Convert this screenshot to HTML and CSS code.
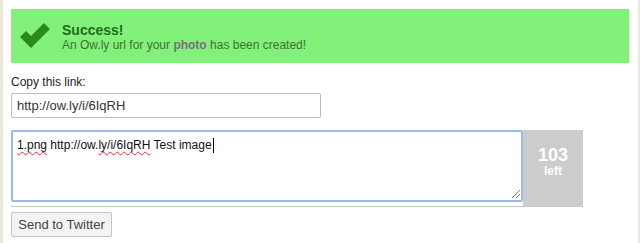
FILE: index.html
```html
<!DOCTYPE html>
<html lang="en">
<head>
    <meta charset="UTF-8">
    <title>Ow.ly</title>
    <link rel="stylesheet" href="styles.css">
</head>
<body>
    <div class="page">
        <div class="msg_ok">
            <svg class="ico" width="30" height="26" viewBox="0 0 30 26">
                <path d="M0 14 L6 8 L11 13 L24 0 L30 6 L11 25 Z" fill="#2a8a1e"/>
            </svg>
            <div class="msg_txt">
                <strong>Success!</strong>
                <p>An Ow.ly url for your <b>photo</b> has been created!</p>
            </div>
        </div>

        <label class="lbl">Copy this link:</label>
        <div class="link_box">http://ow.ly/i/6IqRH</div>

        <div class="tw_row">
            <div class="tw_area">
                <div class="tw_txt"><span class="sp">1.png</span> http://ow.<span class="sp">ly/i/6IqRH</span> Test image<span class="caret"></span></div>
                <span class="grip"></span>
            </div>
            <div class="count">
                <strong>103</strong>
                <span>left</span>
            </div>
        </div>

        <button class="btn">Send to Twitter</button>
    </div>
</body>
</html>
```

FILE: styles.css
```css
/* reset */
body,p{margin: 0; padding: 0;}
body{font-family: "Liberation Sans", Arial, sans-serif; background: #ebe8dc;}

/* layout */
.page{
    margin: 0 2px 0 3px; height: 243px; background: #fff;
    padding: 9px 8px 0 8px; box-sizing: border-box;
}

.msg_ok{
    width: 618px; height: 54px; background: #81f179;
    display: flex; align-items: flex-start; box-sizing: border-box;
    padding: 14px 0 0 9px;
}
.msg_ok .ico{margin-top: 0; margin-right: 12px;}
.msg_txt strong{display: block; font-size: 14px; color: #236b1a; line-height: 15px; margin-top: 0;}
.msg_txt p{font-size: 12px; color: #43703a; line-height: 15px;}
.msg_txt p b{color: #7b6c7b;}

.lbl{display: block; font-size: 12px; color: #222; margin-top: 11px; line-height: 16px;}
.link_box{
    width: 310px; height: 25px; box-sizing: border-box; margin-top: 3px;
    border: 1px solid #bdbdbd; border-radius: 2px;
    font-size: 13px; color: #333; padding: 4px 0 0 5px;
}

.tw_row{display: flex; margin-top: 12px;}
.tw_area{
    position: relative; width: 512px; height: 77px; box-sizing: border-box;
    border-bottom: 1px solid #c4c4c4;
}
.tw_area .tw_txt{
    height: 72px; box-sizing: border-box;
    border: 2px solid #9ab8f2; border-radius: 2px;
    font-size: 12px; color: #111; padding: 6px 0 0 4px; line-height: 14px;
}
.sp{text-decoration: underline wavy #e03030; text-decoration-thickness: 1px; text-underline-offset: 2px;}
.caret{display: inline-block; width: 1px; height: 15px; background: #000; vertical-align: top; margin-left: 1px;}
.grip{
    position: absolute; right: 3px; bottom: 8px; width: 8px; height: 8px;
    background: linear-gradient(135deg, transparent 45%, #777 45%, #777 55%, transparent 55%, transparent 70%, #777 70%, #777 80%, transparent 80%);
}
.count{
    width: 60px; height: 77px; background: #cccccc; color: #fff;
    display: flex; flex-direction: column; align-items: center; padding-top: 15px; box-sizing: border-box;
}
.count strong{font-size: 18px; line-height: 20px;}
.count span{font-size: 12px; font-weight: bold; line-height: 13px;}

.btn{
    display: block; margin-top: 5px; width: 101px; height: 25px;
    font-family: "Liberation Sans", Arial, sans-serif; font-size: 13px; color: #444;
    background: #f3f3f3; border: 1px solid #c4c4c4; border-radius: 2px; padding: 0;
}
```
